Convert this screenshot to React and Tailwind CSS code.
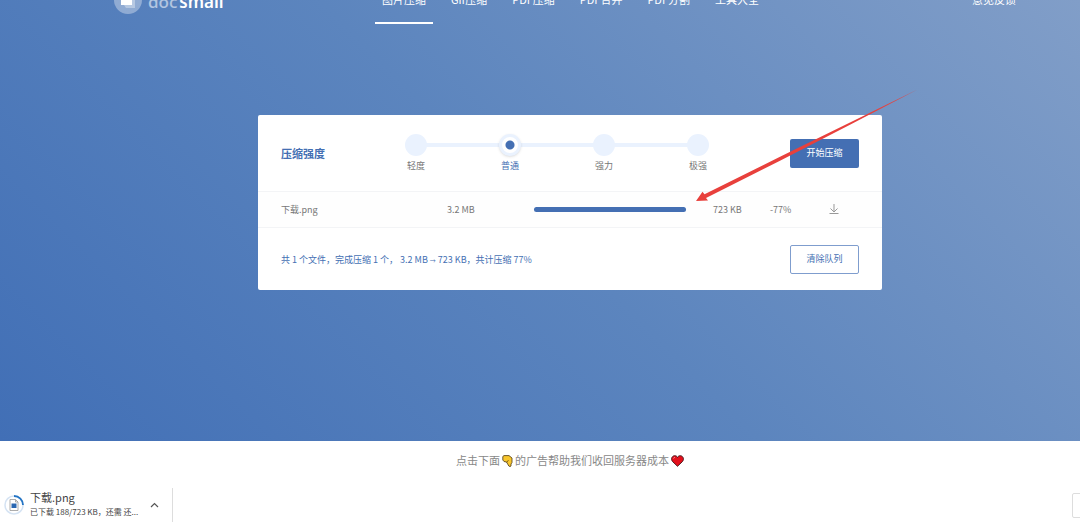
import { useState } from "react";
import clsx from "clsx";

const NAV_ITEMS = ["图片压缩", "Gif压缩", "PDF压缩", "PDF合并", "PDF分割", "工具大全"];
const LEVELS = ["轻度", "普通", "强力", "极强"];
const FILES = [{ name: "下载.png", before: "3.2 MB", after: "723 KB", ratio: "-77%", progress: 100 }];

function Header() {
  return (
    <header className="-mt-6 flex h-12 items-center text-[11px] text-white">
      <a href="#" className="flex w-[261px] items-center gap-1.5">
        <svg className="size-7" viewBox="0 0 28 28">
          <circle cx="14" cy="14" r="14" fill="#fff" fillOpacity="0.35" />
          <path d="M10 8h11v14h-9l-2-3z" fill="#fff" fillOpacity="0.35" />
          <path d="M7 6h11v13H7z" fill="#fff" />
        </svg>
        <span className="pt-1 font-['Noto_Sans',sans-serif] text-[17px] leading-6 font-semibold">
          <span className="font-medium text-white/55">doc</span>
          <span className="ml-0.5">small</span>
        </span>
      </a>
      <nav className="flex h-full gap-[11px]">
        {NAV_ITEMS.map((item, i) => (
          <a
            key={item}
            href="#"
            className={clsx("flex items-center border-b-2 px-[7px]", i === 0 ? "border-white" : "border-transparent")}
          >
            {item}
          </a>
        ))}
      </nav>
      <a href="#" className="ml-auto pr-2.5 pb-0.5">意见反馈</a>
    </header>
  );
}

// Compression level, four radio dots joined by a line
function LevelPicker() {
  const [level, setLevel] = useState(1);
  return (
    <fieldset className="relative flex w-[376px]">
      <div className="absolute inset-x-12 top-[9px] h-1 bg-[#eaf2fe]" />
      {LEVELS.map((label, i) => (
        <label key={label} className="relative flex flex-1 flex-col items-center gap-1">
          <input
            type="radio"
            name="level"
            checked={level === i}
            onChange={() => setLevel(i)}
            className="peer size-[22px] appearance-none rounded-full border-[#eaf2fe] bg-[#eaf2fe] checked:border-[3px] checked:bg-[radial-gradient(circle,#446fb3_0_4px,#fff_5px)] checked:shadow-sm"
          />
          <span className="leading-3 text-[#777] peer-checked:text-[#446fb3]">{label}</span>
        </label>
      ))}
    </fieldset>
  );
}

function DownloadIcon() {
  return (
    <svg className="size-3" viewBox="0 0 12 12" fill="none" stroke="#999" strokeWidth="1">
      <path d="M6 0v8M2.500 4.500L6 8l3.500-3.500M1.500 9.500h9" />
    </svg>
  );
}

function FileTable() {
  return (
    <table className="w-full table-fixed border-y border-[#f3f4f6] bg-[#fefefe] text-left text-[#777]">
      <tbody>
        {FILES.map((file) => (
          <tr key={file.name} className="h-9">
            <td className="w-[189px] pl-[23px]">{file.name}</td>
            <td className="w-[87px]">{file.before}</td>
            <td>
              <div className="h-[5px] w-[152px] rounded-full bg-[#eaf2fe]">
                <div className="h-full rounded-full bg-[#446fb3]" style={{ width: `${file.progress}%` }} />
              </div>
            </td>
            <td className="w-[57px]">{file.after}</td>
            <td className="w-[58px]">{file.ratio}</td>
            <td className="w-[54px]">
              <a href="#" aria-label="下载" className="block">
                <DownloadIcon />
              </a>
            </td>
          </tr>
        ))}
      </tbody>
    </table>
  );
}

function CompressCard() {
  return (
    <section className="mx-auto mt-[91px] w-[624px] rounded-xs bg-white text-[9px]">
      <div className="flex h-[76px] items-center px-[23px]">
        <h2 className="w-[88px] text-[11px] font-bold text-[#446fb3]">压缩强度</h2>
        <LevelPicker />
        <button className="ml-auto h-[29px] w-[69px] rounded-xs bg-[#446fb3] text-white">开始压缩</button>
      </div>
      <FileTable />
      <div className="flex h-[62px] items-center justify-between px-[23px] text-[#446fb3]">
        <p className="pt-0.5">
          共 1 个文件，完成压缩 1 个， 3.2 MB <span className="text-[6px]">→</span> 723 KB，共计压缩 77%
        </p>
        <button className="h-[29px] w-[69px] rounded-xs border border-[#7f9dce] bg-white">清除队列</button>
      </div>
    </section>
  );
}

function Arrow() {
  return (
    <svg className="pointer-events-none absolute top-[88px] left-[695px] h-[114px] w-[224px]" viewBox="695 88 224 114">
      <path d="M696 201L702.500 191.800L704.500 194.200L780 156.800L850 122.500L917.500 89.500L850 124.800L780 160.800L706 198L708 200.500Z" fill="#e8403c" />
    </svg>
  );
}

function PointDownIcon() {
  return (
    <svg className="h-3 w-[11px]" viewBox="0 0 11 12" stroke="#4b3712" strokeWidth="0.8" strokeLinejoin="round">
      <path d="M.8 1.500L2 .6h5l3 2.400v4.500L9 9v2l-1 .6-1.200-.6L4.500 7 2 6.500 .8 5z" fill="#f8c62d" />
      <path d="M4.500 7L6.500 5.500" fill="none" />
    </svg>
  );
}

function HeartIcon() {
  return (
    <svg className="h-3 w-[13px]" viewBox="0 0 13 12">
      <path d="M6.500 11.300L1.500 6.500C-.8 3.500 1.500.7 3.700.7 5 .7 6 1.300 6.500 2.500 7 1.300 8 .7 9.300.7c2.200 0 4.500 2.800 2.200 5.800z" fill="#e3101c" stroke="#3c1013" strokeWidth="0.9" />
      <path d="M2.500 3.500Q3 2.300 4 2.300" fill="none" stroke="#ff8c90" />
    </svg>
  );
}

function DownloadBar() {
  return (
    <footer className="flex h-[34px] items-center">
      <div className="flex h-full w-[173px] items-center border-r border-[#ddd] pl-1">
        <svg className="size-5" viewBox="0 0 20 20" fill="none">
          <circle cx="10" cy="10" r="9" stroke="#d5e3f3" strokeWidth="1.500" />
          <path d="M10 1a9 9 0 0 1 9 9" stroke="#2374c4" strokeWidth="1.800" />
          <path d="M6 4.500h5.500L14 7v8.500H6z" fill="#fff" stroke="#999" strokeWidth="0.8" />
          <path d="M11.500 4.500V7H14" stroke="#999" strokeWidth="0.8" />
          <path d="M7.500 8.500h5v4.500h-5z" fill="#2a67b1" />
        </svg>
        <div className="ml-1.5 w-[120px] pb-0.5 text-[#444]">
          <p className="text-[11px] leading-4">下载.png</p>
          <p className="text-[8px] leading-[14px] whitespace-nowrap">已下载 188/723 KB，还需 还...</p>
        </div>
        <button aria-label="更多" className="text-[#555]">
          <svg className="h-[9px] w-[9px]" viewBox="0 0 9 9" fill="none" stroke="currentColor" strokeWidth="1.200">
            <path d="M1 6L4.500 2.500 8 6" />
          </svg>
        </button>
      </div>
      <button aria-label="全部显示" className="-mr-10 ml-auto h-[25px] w-12 rounded-xs border border-[#ddd]" />
    </footer>
  );
}

export default function App() {
  return (
    <div className="relative overflow-hidden bg-white font-['Noto_Sans_CJK_SC',sans-serif]">
      <main className="overflow-hidden bg-[linear-gradient(45deg,#416fb6,#5c85be_50%,#819ec8)] pb-[151px] pl-15">
        <div className="mx-auto w-[912px]">
          <Header />
          <CompressCard />
        </div>
      </main>
      <p className="flex h-[47px] items-center justify-center pb-2 pl-15 text-[11px] text-[#888]">
        <span>点击下面</span>
        <span className="mx-0.5"><PointDownIcon /></span>
        <span>的广告帮助我们收回服务器成本</span>
        <span className="ml-0.5"><HeartIcon /></span>
      </p>
      <DownloadBar />
      <Arrow />
    </div>
  );
}
